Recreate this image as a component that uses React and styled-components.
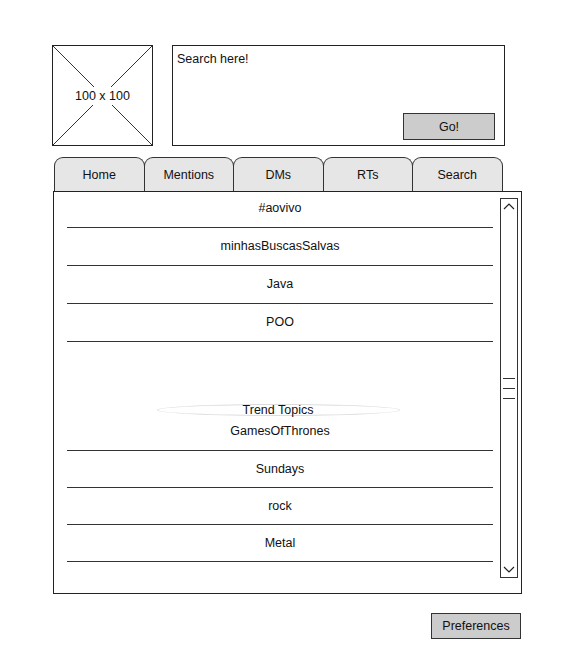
import React from "react";
import styled, { createGlobalStyle } from "styled-components";

const GlobalStyle = createGlobalStyle`
  *, *::before, *::after {
    box-sizing: border-box;
  }
  body {
    margin: 0;
    background: #fff;
    font-family: "Liberation Sans", Arial, sans-serif;
    font-size: 12.5px;
    color: #111;
  }
`;

const Page = styled.div`
  width: 522px;
  padding: 45px 0 0 52px;
`;

const Header = styled.div`
  display: flex;
  gap: 19px;
`;

const ImagePlaceholder = styled.div`
  width: 101px;
  height: 101px;
  border: 1px solid #222;
  display: flex;
  align-items: center;
  justify-content: center;
  background:
    linear-gradient(to top right, transparent calc(50% - 0.7px), #333 50%, transparent calc(50% + 0.7px)),
    linear-gradient(to bottom right, transparent calc(50% - 0.7px), #333 50%, transparent calc(50% + 0.7px));

  span {
    background: #fff;
    padding: 2px 1px;
    line-height: 14px;
  }
`;

const SearchBox = styled.div`
  width: 333px;
  height: 101px;
  border: 1px solid #222;
  display: flex;
  flex-direction: column;
  justify-content: space-between;
`;

const Placeholder = styled.div`
  padding: 5px 0 0 4px;
  line-height: 16px;
`;

const Button = styled.button`
  width: ${(p) => p.$width}px;
  height: ${(p) => p.$height}px;
  background: #cccccc;
  border: 1px solid #333;
  font: inherit;
  color: #111;
  padding: 0;
  cursor: pointer;
`;

const GoRow = styled.div`
  display: flex;
  justify-content: flex-end;
  padding: 0 9px 5px 0;
`;

const Tabs = styled.div`
  display: flex;
  margin-top: 11px;
  padding-left: 2px;
`;

const Tab = styled.div`
  width: 90.5px;
  height: 34px;
  margin-right: -1px;
  border: 1px solid #333;
  border-bottom: none;
  border-radius: 9px 9px 0 0;
  background: #e6e6e6;
  display: flex;
  align-items: center;
  justify-content: center;
`;

const Panel = styled.div`
  margin-left: 1px;
  width: 469px;
  height: 403px;
  border: 1px solid #222;
  display: flex;
  gap: 7px;
  padding: 0 3px 0 13px;
`;

const List = styled.div`
  flex: 1;
  margin-top: -2px;
  display: flex;
  flex-direction: column;
`;

const Row = styled.div`
  padding: ${(p) => p.$top}px 0 ${(p) => p.$bottom}px;
  line-height: 16px;
  text-align: center;
  border-bottom: 1px solid #333;
`;

const SectionTitle = styled.div`
  align-self: center;
  margin: 62px 0 0 -4px;
  width: 243px;
  height: 12px;
  border: 1px solid #ddd;
  border-radius: 50%;
  display: flex;
  align-items: center;
  justify-content: center;
  line-height: 10px;
`;

const Scrollbar = styled.div`
  margin-top: 6px;
  width: 18px;
  height: 380px;
  border: 1px solid #333;
  display: flex;
  flex-direction: column;
  justify-content: space-between;
  align-items: center;
  padding: 4px 0;
`;

const Grip = styled.div`
  width: 12px;
  display: flex;
  flex-direction: column;
  gap: 9px;
  margin-top: 1px;

  i {
    display: block;
    height: 1px;
    background: #333;
  }
`;

const Footer = styled.div`
  display: flex;
  justify-content: flex-end;
  padding-right: 1px;
  margin-top: 19px;
`;

const Chevron = ({ down }) => (
  <svg width="12" height="7" viewBox="0 0 12 7">
    <polyline
      points={down ? "1,1 6,6 11,1" : "1,6 6,1 11,6"}
      fill="none"
      stroke="#222"
      strokeWidth="1.2"
    />
  </svg>
);

const topics = ["#aovivo", "minhasBuscasSalvas", "Java", "POO"];
const trends = ["GamesOfThrones", "Sundays", "rock", "Metal"];

export default function App() {
  return (
    <>
      <GlobalStyle />
      <Page>
        <Header>
          <ImagePlaceholder>
            <span>100 x 100</span>
          </ImagePlaceholder>
          <SearchBox>
            <Placeholder>Search here!</Placeholder>
            <GoRow>
              <Button $width={92} $height={27}>Go!</Button>
            </GoRow>
          </SearchBox>
        </Header>
        <Tabs>
          {["Home", "Mentions", "DMs", "RTs", "Search"].map((t) => (
            <Tab key={t}>{t}</Tab>
          ))}
        </Tabs>
        <Panel>
          <List>
            {topics.map((t) => (
              <Row key={t} $top={10} $bottom={11}>
                {t}
              </Row>
            ))}
            <SectionTitle>Trend Topics</SectionTitle>
            {trends.map((t, i) => (
              <Row key={t} $top={i === 0 ? 7 : 10} $bottom={i === 0 ? 11 : 10}>
                {t}
              </Row>
            ))}
          </List>
          <Scrollbar>
            <Chevron />
            <Grip>
              <i />
              <i />
              <i />
            </Grip>
            <Chevron down />
          </Scrollbar>
        </Panel>
        <Footer>
          <Button $width={90} $height={26}>Preferences</Button>
        </Footer>
      </Page>
    </>
  );
}
